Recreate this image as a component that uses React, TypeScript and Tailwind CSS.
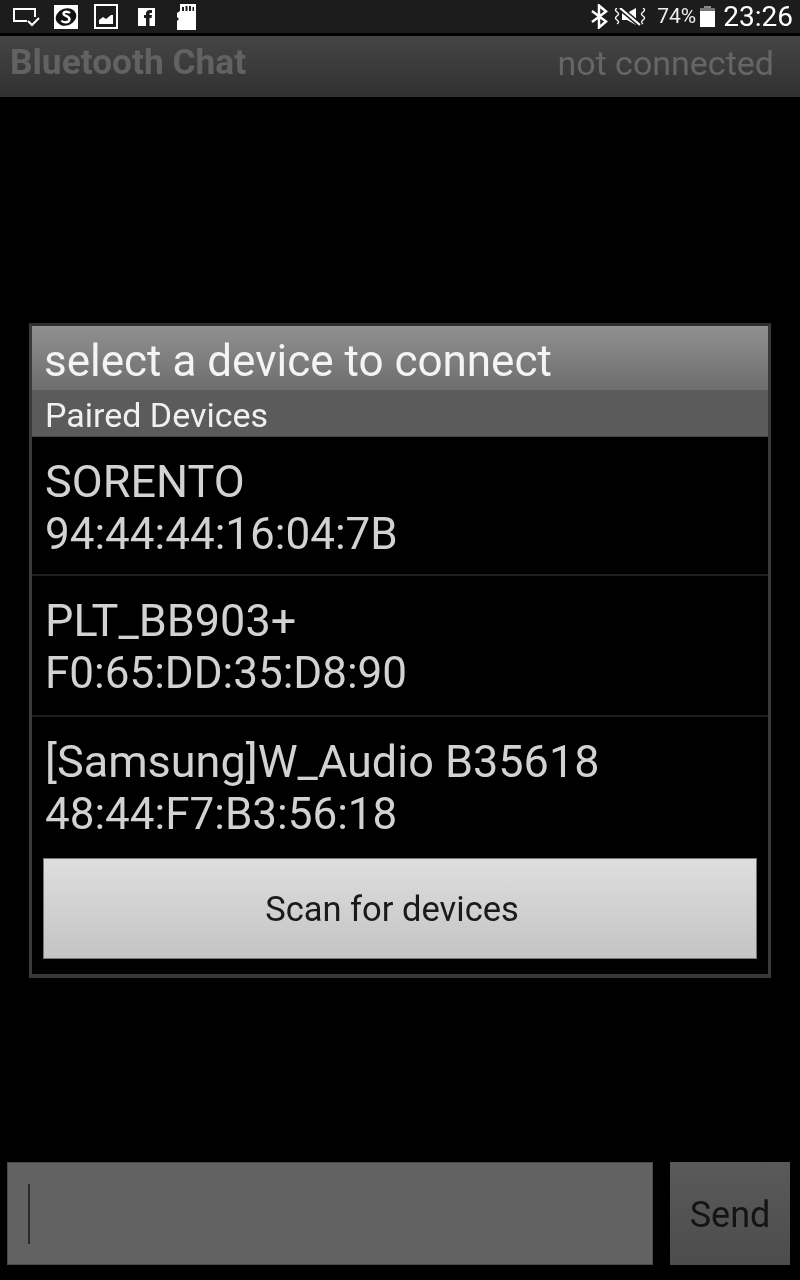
const devices = [
  { name: "SORENTO", addr: "94:44:44:16:04:7B" },
  { name: "PLT_BB903+", addr: "F0:65:DD:35:D8:90" },
  { name: "[Samsung]W_Audio B35618", addr: "48:44:F7:B3:56:18" },
];

const StatusLeft = () => (
  <div className="flex items-center">
    {/* cast screen with check */}
    <svg width="28" height="20" viewBox="0 0 28 20" className="ml-[12px]" fill="none">
      <path d="M15 14H2V2h21v8" stroke="#fff" strokeWidth="2" />
      <path d="M16 14l4 4 7-7" stroke="#fff" strokeWidth="2" />
    </svg>
    {/* S badge */}
    <svg width="24" height="24" viewBox="0 0 24 24" className="ml-[14px]">
      <rect width="24" height="24" fill="#fff" />
      <ellipse cx="12" cy="12" rx="10.500" ry="8.500" fill="#111" transform="rotate(-20 12 12)" />
      <path d="M16 8c-1.500-1.500-6-2-6.500.5S16 11 15.500 14.500 9 18 7.500 15.500" fill="none" stroke="#fff" strokeWidth="2.400" />
    </svg>
    {/* picture */}
    <svg width="24" height="25" viewBox="0 0 24 25" className="ml-[16px]">
      <rect width="24" height="25" fill="#fff" />
      <rect x="2" y="2" width="20" height="21" fill="#1c1c1c" />
      <path d="M5 20v-4l4-3 3 2 5-4 2 0v9z" fill="#fff" />
    </svg>
    {/* facebook */}
    <svg width="17" height="18" viewBox="0 0 17 18" className="ml-[20px]">
      <rect width="17" height="18" fill="#fff" />
      <path d="M8 18v-8H6V7h2V5.500C8 3.500 9.500 2 11.500 2H14v3h-1.500c-.6 0-1 .4-1 1v1H14l-.5 3h-2v8z" fill="#1c1c1c" />
    </svg>
    {/* sd card */}
    <svg width="19" height="26" viewBox="0 0 19 26" className="ml-[22px]">
      <path d="M3 0h16v26H0v-9l2-2-2-2V9l3-2z" fill="#fff" />
      <path d="M5 3h2v4H5zM8.500 2h2v5h-2zM12 2h2v5h-2zM15.500 3H17v4h-1.500z" fill="#1c1c1c" />
    </svg>
  </div>
);

const StatusRight = () => (
  <div className="flex items-center">
    {/* bluetooth */}
    <svg width="17" height="25" viewBox="0 0 17 25" fill="none">
      <path d="M1 7l14 10.500L8 23.500V1.500l7 6L1 18" stroke="#fff" strokeWidth="2.500" />
    </svg>
    {/* vibrate, muted */}
    <svg width="32" height="18" viewBox="0 0 32 18" fill="none" className="ml-[6px]">
      <path d="M3 0Q0 2 3 4T3 8 3 12 3 16M29 0Q32 2 29 4T29 8 29 12 29 16" stroke="#fff" strokeWidth="1.400" />
      <path d="M8 5h5l9-5v17l-9-5H8z" fill="#fff" />
      <path d="M6 0l20 17" stroke="#1c1c1c" strokeWidth="5" />
      <path d="M6 0l20 17" stroke="#fff" strokeWidth="2.200" />
    </svg>
    <span className="ml-[11px] text-[21px] leading-none text-[#eee]">74%</span>
    {/* battery */}
    <div className="ml-[4px] flex w-[15px] flex-col items-center">
      <div className="h-[2px] w-[7px] bg-[#888]" />
      <div className="h-[3px] w-[15px] bg-[#777]" />
      <div className="h-[16px] w-[15px] bg-white" />
    </div>
    <span className="ml-[8px] mr-[7px] text-[28px] leading-none text-white">23:26</span>
  </div>
);

export default function App() {
  return (
    <div className="flex h-[1280px] w-[800px] flex-col overflow-hidden bg-black font-['Roboto',sans-serif] blur-[0.5px]">
      <div className="flex h-[33px] items-center justify-between bg-[#1c1c1c]">
        <StatusLeft />
        <StatusRight />
      </div>
      <div className="mt-[3px] flex h-[61px] items-center justify-between bg-gradient-to-b from-[#454545] to-[#313131] pb-[7px] pl-[10px] pr-[26px]">
        <span className="text-[35.300px] font-bold leading-none text-[#626262]">Bluetooth Chat</span>
        <span className="text-[34px] leading-none text-[#666]">not connected</span>
      </div>

      <div className="flex-1 pl-[29px] pt-[226px]">
        {/* device list dialog */}
        <div className="flex h-[655px] w-[742px] flex-col border-x-[3px] border-b-[4px] border-t-[3px] border-x-[#3a3a3a] border-b-[#383838] border-t-[#2e2e2e] bg-black">
          <div className="flex h-[64px] items-center bg-gradient-to-b from-[#909090] to-[#6e6e6e] pl-[12px] pt-[6px]">
            <span className="text-[44px] leading-none text-[#f4f4f4]">select a device to connect</span>
          </div>
          <div className="flex h-[47px] items-center border-b border-[#444] bg-[#5b5b5b] pl-[13px] pt-[3px]">
            <span className="text-[34px] leading-none text-[#f0f0f0]">Paired Devices</span>
          </div>
          {devices.map((d, i) => (
            <div
              key={d.addr}
              className={`flex flex-col pl-[13px] pt-[19px] text-[#d2d2d2] ${i === 0 ? "h-[139px] border-b-2 border-[#1f1f1f]" : i === 1 ? "h-[141px] border-b-2 border-[#1f1f1f]" : "h-[141px]"}`}
            >
              <span className="text-[45px] leading-[52px]">{d.name}</span>
              <span className="text-[44px] leading-[52px]">{d.addr}</span>
            </div>
          ))}
          <div className="px-[11px]">
            <button className="flex h-[101px] w-[714px] items-center justify-center border border-[#777] bg-gradient-to-b from-[#dedede] to-[#c4c4c4] pr-[16px] pt-[3px] text-[34.500px] text-[#1a1a1a]">
              Scan for devices
            </button>
          </div>
        </div>
      </div>

      <div className="mb-[15px] flex h-[103px] pl-[7px]">
        <div className="flex h-full w-[646px] items-center border border-[#4a4a4a] bg-[#626262] pl-[20px]">
          <div className="h-[60px] w-[2px] bg-[#2a2a2a]" />
        </div>
        <button className="ml-[17px] flex h-full w-[120px] items-center justify-center bg-gradient-to-b from-[#5a5a5a] to-[#4c4c4c] pt-[2px] text-[36px] text-[#141414]">
          Send
        </button>
      </div>
    </div>
  );
}
